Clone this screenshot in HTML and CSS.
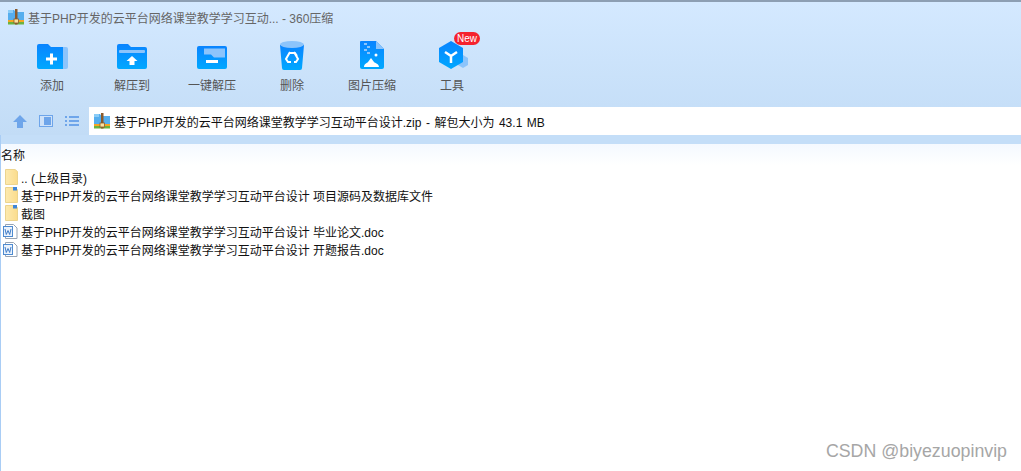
FILE: index.html
```html
<!DOCTYPE html>
<html>
	<head>
		<meta charset="utf-8">
		<link rel="stylesheet" href="styles.css">
	</head>
	<body>
		<svg class="sprites" width="0" height="0">
			<defs>
				<linearGradient id="blue" x1="0" y1="0" x2="0" y2="1">
					<stop offset="0" stop-color="#0a84ff"/>
					<stop offset="1" stop-color="#00a8ff"/>
				</linearGradient>
				<linearGradient id="yellow" x1="0" y1="0" x2="1" y2="0">
					<stop offset="0" stop-color="#fdeab0"/>
					<stop offset="1" stop-color="#fbdc8c"/>
				</linearGradient>
				<symbol id="zip" viewBox="0 0 16 16">
					<path d="M0 1h6l1.500 2H16v8H0z" fill="#55aeee"/>
					<path d="M0 1h5v3H0z" fill="#8accf7"/>
					<rect x="0" y="11" width="16" height="2" fill="#f5a623"/>
					<rect x="0" y="13" width="16" height="2.500" fill="#6cb33f"/>
					<rect x="7" y="0" width="2.500" height="15.500" fill="#8a5a2b"/>
					<rect x="6" y="10" width="4.500" height="4" fill="#f8e3a0" stroke="#8a5a2b" stroke-width=".8"/>
				</symbol>
				<symbol id="folder" viewBox="0 0 20 18">
					<path d="M4.500 1.500h9.500l2.500 2v13h-12z" fill="url(#yellow)" stroke="#ecd48e"/>
				</symbol>
				<symbol id="folder-linked" viewBox="0 0 20 18">
					<path d="M4.500 1.500h9.500l2.500 2v13h-12z" fill="url(#yellow)" stroke="#ecd48e"/>
					<rect x="12" y="1" width="4" height="3.500" fill="#3f86d8"/>
				</symbol>
				<symbol id="doc" viewBox="0 0 20 18">
					<path d="M4.500 2.500h8l3.500 3.500v10.500H4.500z" fill="#fff" stroke="#98a4b4"/>
					<rect x="2.500" y="4.500" width="9" height="10" fill="#eaf2fc" stroke="#4f8bd0"/>
					<path d="M4 7l1.300 5.500L7 8.500l1.700 4L10 7" fill="none" stroke="#3f7cc8"/>
				</symbol>
			</defs>
		</svg>

		<div class="top">
			<div class="title">
				<svg class="zip-icon"><use href="#zip"/></svg>
				<span>基于PHP开发的云平台网络课堂教学学习互动... - 360压缩</span>
			</div>

			<div class="toolbar">
				<div class="tool">
					<svg viewBox="0 0 40 36">
						<path d="M5 8a2 2 0 0 1 2-2h9l3 3h12v22H7a2 2 0 0 1-2-2z" fill="url(#blue)"/>
						<path d="M31 9h3a2 2 0 0 1 2 2v18a2 2 0 0 1-2 2h-3z" fill="#8cc4fb"/>
						<path d="M14 19.500h4v-4h3v4h4v3h-4v4h-3v-4h-4z" fill="#fff"/>
					</svg>
					<span>添加</span>
				</div>
				<div class="tool">
					<svg viewBox="0 0 40 36">
						<path d="M5 8a2 2 0 0 1 2-2h9l3 3h14a2 2 0 0 1 2 2v18a2 2 0 0 1-2 2H7a2 2 0 0 1-2-2z" fill="url(#blue)"/>
						<rect x="7" y="12" width="26" height="3" rx="1" fill="#8cc4fb"/>
						<path d="M20 18l5.500 5h-3v4h-5v-4h-3z" fill="#fff"/>
					</svg>
					<span>解压到</span>
				</div>
				<div class="tool">
					<svg viewBox="0 0 40 36">
						<rect x="5" y="8" width="30" height="23" rx="2" fill="url(#blue)"/>
						<path d="M12 10.500h21v9H22l-3-3h-7z" fill="#8cc4fb"/>
						<rect x="14" y="22" width="12" height="3" fill="#fff"/>
					</svg>
					<span>一键解压</span>
				</div>
				<div class="tool">
					<svg viewBox="0 0 40 36">
						<path d="M8 7l2 23a2 2 0 0 0 2 2h16a2 2 0 0 0 2-2l2-23z" fill="url(#blue)"/>
						<ellipse cx="20" cy="6.500" rx="12" ry="3.500" fill="#8cc4fb"/>
						<path d="M18 14l-4 7 2 3h3M22 14l4 7-2 3h-2M17 15h6l2 3" fill="none" stroke="#fff" stroke-width="2"/>
					</svg>
					<span>删除</span>
				</div>
				<div class="tool">
					<svg viewBox="0 0 40 36">
						<path d="M9 3h15l8 8v18a2 2 0 0 1-2 2H10a2 2 0 0 1-2-2V4a1 1 0 0 1 1-1z" fill="url(#blue)"/>
						<path d="M24 3l8 8h-8z" fill="#8cc4fb"/>
						<path d="M12 5h3v2h-3zM15 8h3v2h-3zM12 11h3v2h-3zM15 14h3v2h-3z" fill="#8cc4fb"/>
						<circle cx="24" cy="17" r="1.500" fill="#fff"/>
						<path d="M12 29c0-3 3-4 4-5l3-4 3 4c1 1 5 2 5 5z" fill="#fff"/>
					</svg>
					<span>图片压缩</span>
				</div>
				<div class="tool">
					<svg viewBox="0 0 40 36">
						<path d="M31 17l5 3v7l-5 3-5-3v-7z" fill="#8cc4fb"/>
						<path d="M19 3l12 7v14l-12 7-12-7V10z" fill="url(#blue)"/>
						<path d="M19 18v7M19 18l-6-4M19 18l6-4" stroke="#fff" stroke-width="2.500" fill="none"/>
					</svg>
					<span>工具</span>
					<b class="badge">New</b>
				</div>
			</div>

			<div class="nav">
				<div class="nav-icons">
					<svg viewBox="0 0 16 16"><path d="M8 2l7 7h-4v6H5V9H1z" fill="#6ea5ea"/></svg>
					<svg viewBox="0 0 16 16"><rect x="1.500" y="2.500" width="13" height="11" fill="#cfe2f9" stroke="#6ea5ea"/><rect x="6" y="4" width="7" height="8" fill="#6ea5ea"/></svg>
					<svg viewBox="0 0 16 16"><path d="M1 3h2v2H1zM5 3h10v2H5zM1 7h2v2H1zM5 7h10v2H5zM1 11h2v2H1zM5 11h10v2H5z" fill="#6ea5ea"/></svg>
				</div>
				<div class="address">
					<svg class="zip-icon"><use href="#zip"/></svg>
					<span>基于PHP开发的云平台网络课堂教学学习互动平台设计.zip - 解包大小为 43.1 MB</span>
				</div>
			</div>
		</div>

		<div class="files">
			<div class="head">名称</div>
			<ul class="list">
				<li><svg class="file-icon"><use href="#folder"/></svg>.. (上级目录)</li>
				<li><svg class="file-icon"><use href="#folder-linked"/></svg>基于PHP开发的云平台网络课堂教学学习互动平台设计 项目源码及数据库文件</li>
				<li><svg class="file-icon"><use href="#folder-linked"/></svg>截图</li>
				<li><svg class="file-icon"><use href="#doc"/></svg>基于PHP开发的云平台网络课堂教学学习互动平台设计 毕业论文.doc</li>
				<li><svg class="file-icon"><use href="#doc"/></svg>基于PHP开发的云平台网络课堂教学学习互动平台设计 开题报告.doc</li>
			</ul>
		</div>

		<div class="watermark">CSDN @biyezuopinvip</div>
	</body>
</html>
```

FILE: styles.css
```css
html,
body {
	margin: 0;
	height: 100%;
}

body {
	position: relative;
	overflow: hidden;
	background-color: #fff;
	font-family: "Liberation Sans", "Noto Sans CJK SC", sans-serif;
	font-size: 12px;
	color: #111;
}

.sprites {
	display: block;
}

.top {
	height: 135px;
	border-top: 2px solid #8d9fb3;
	box-sizing: border-box;
	background: linear-gradient(#d4e9ff, #c2dcf6);
}

.title {
	display: flex;
	align-items: center;
	gap: 4px;
	height: 30px;
	padding-left: 8px;
	color: #666;
}

.zip-icon {
	width: 16px;
	height: 16px;
}

.toolbar {
	display: flex;
	padding: 6px 0 0 12px;
	height: 69px;
	box-sizing: border-box;
}

.tool {
	position: relative;
	display: flex;
	flex-direction: column;
	align-items: center;
	width: 80px;
	color: #555;
}

.tool svg {
	width: 40px;
	height: 36px;
}

.tool span {
	margin-top: 2px;
}

.badge {
	position: absolute;
	left: 42px;
	top: -6px;
	width: 26px;
	height: 13px;
	border-radius: 7px;
	background-color: #f5222d;
	color: #fff;
	font-size: 10px;
	font-weight: normal;
	line-height: 13px;
	text-align: center;
}

.nav {
	display: flex;
	height: 28px;
	margin-top: 6px;
}

.nav-icons {
	display: flex;
	align-items: center;
	gap: 10px;
	width: 77px;
	padding-left: 12px;
}

.nav-icons svg {
	width: 16px;
	height: 16px;
}

.address {
	flex: 1;
	display: flex;
	align-items: center;
	gap: 4px;
	padding-left: 5px;
	background-color: #fff;
	color: #111;
	word-spacing: 1.2px;
}

.files {
	border-left: 1px solid #a9cdf5;
	height: 336px;
	box-sizing: border-box;
	background: linear-gradient(#c4def8 9px, #f4f9ff 9px, #fff 30px);
	padding-top: 10px;
}

.head {
	height: 23px;
	line-height: 23px;
}

.list {
	list-style: none;
	margin: 0;
	padding: 0;
}

.list li {
	display: flex;
	align-items: center;
	height: 18px;
}

.file-icon {
	flex: none;
	width: 20px;
	height: 18px;
}

.watermark {
	position: absolute;
	right: 14px;
	bottom: 9px;
	font-size: 17.8px;
	color: #a6a6a6;
}
```
